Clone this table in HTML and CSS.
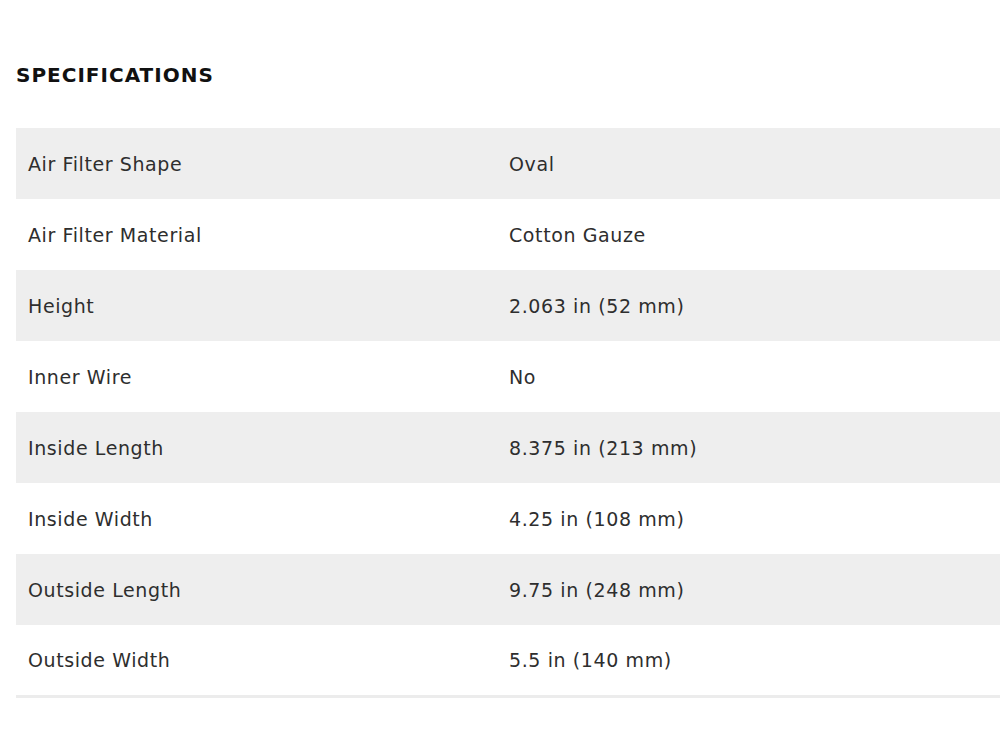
FILE: index.html
```html
<!DOCTYPE html>
<html>
<head>
<meta charset="utf-8">
<link rel="stylesheet" href="styles.css">
</head>
<body>
<section class="specs">
  <h2 class="specs-title">SPECIFICATIONS</h2>
  <table class="specs-table">
    <tbody>
      <tr><td class="label">Air Filter Shape</td><td class="value">Oval</td></tr>
      <tr><td class="label">Air Filter Material</td><td class="value">Cotton Gauze</td></tr>
      <tr><td class="label">Height</td><td class="value">2.063 in (52 mm)</td></tr>
      <tr><td class="label">Inner Wire</td><td class="value">No</td></tr>
      <tr><td class="label">Inside Length</td><td class="value">8.375 in (213 mm)</td></tr>
      <tr><td class="label">Inside Width</td><td class="value">4.25 in (108 mm)</td></tr>
      <tr><td class="label">Outside Length</td><td class="value">9.75 in (248 mm)</td></tr>
      <tr><td class="label">Outside Width</td><td class="value">5.5 in (140 mm)</td></tr>
    </tbody>
  </table>
</section>
</body>
</html>
```

FILE: styles.css
```css
html, body {
  margin: 0;
  padding: 0;
  background: #ffffff;
}
body {
  font-family: "DejaVu Sans", "Noto Sans", sans-serif;
  color: #2e2e2e;
  overflow: hidden;
}
.specs {
  padding: 62px 0 0 16px;
}
.specs-title {
  margin: 0 0 40px 0;
  font-size: 20px;
  line-height: 26px;
  font-weight: 900;
  letter-spacing: 1px;
  color: #111;
}
.specs-table {
  width: 984px;
  border-collapse: collapse;
  border-bottom: 3px solid #ececec;
}
.specs-table td {
  height: 71px;
  padding: 0 12px;
  font-size: 19px;
  letter-spacing: 0.6px;
  vertical-align: middle;
  box-sizing: border-box;
}
.specs-table .label {
  width: 481px;
}
.specs-table tr:nth-child(odd) {
  background: #eeeeee;
}
```
